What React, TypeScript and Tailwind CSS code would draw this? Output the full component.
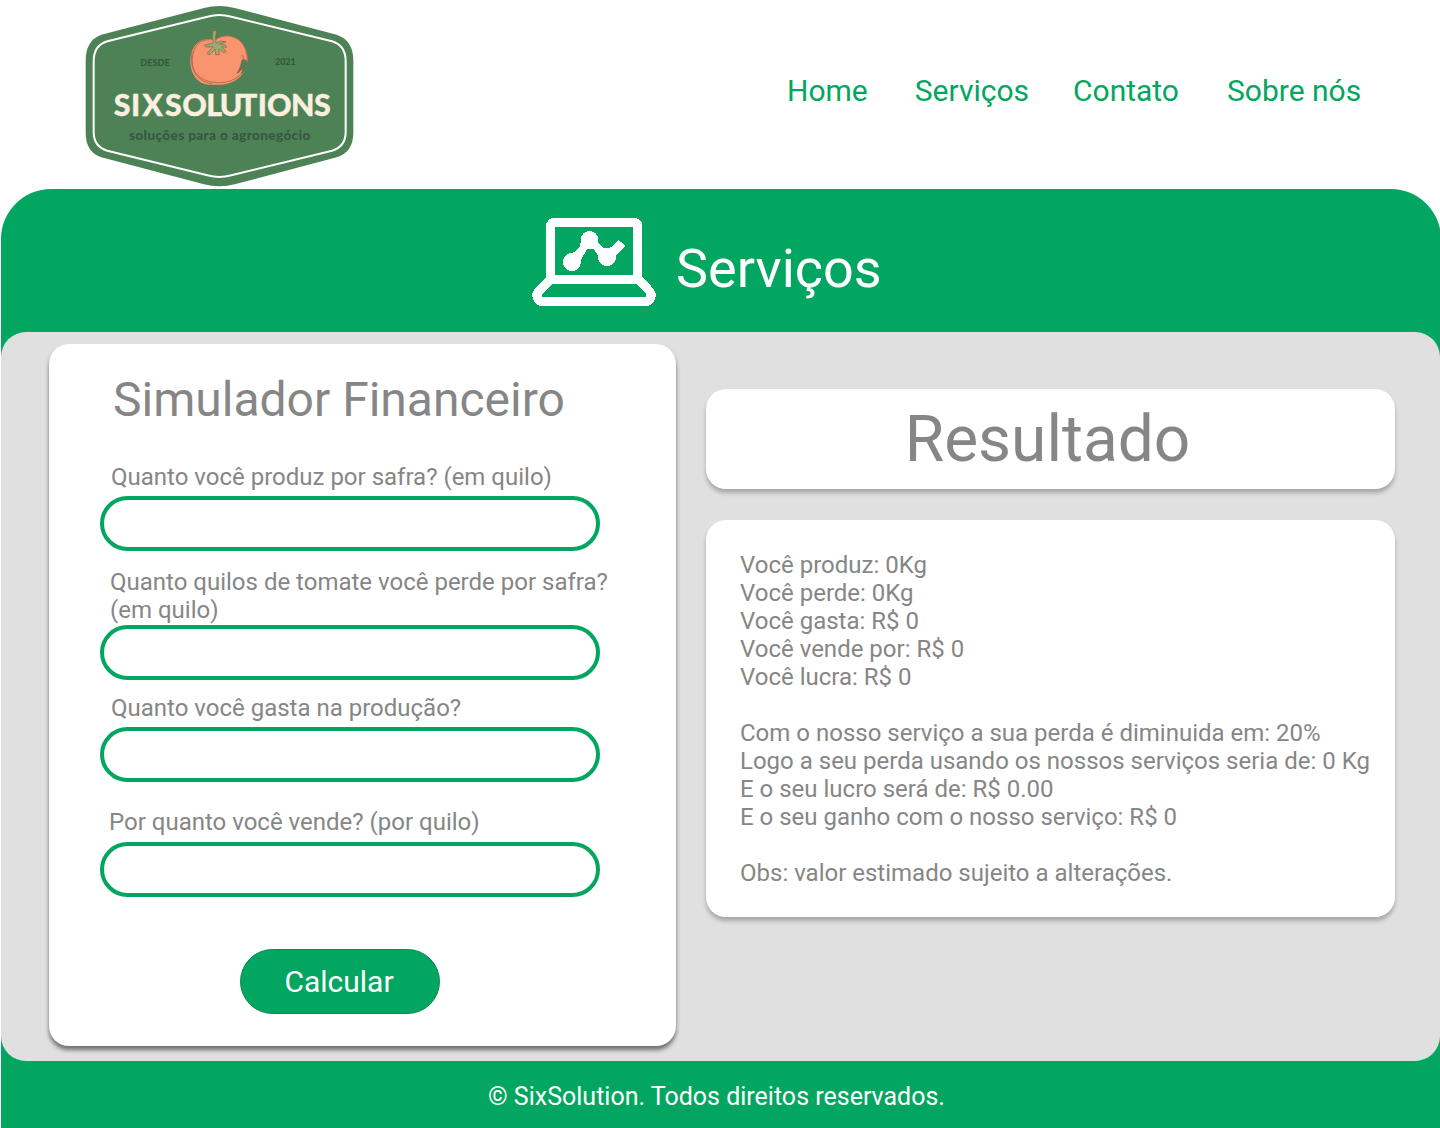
import React from "react";

const navItems = [
  { label: "Home", cls: "ml-[787px]" },
  { label: "Serviços", cls: "ml-[47px]" },
  { label: "Contato", cls: "ml-[44px]" },
  { label: "Sobre nós", cls: "ml-[48px]" },
];

function Logo() {
  return (
    <svg className="absolute left-[80px] top-0 h-[190px] w-[280px]" viewBox="0 0 840 570" role="img" aria-label="SixSolutions">
      <path
        d="M372 24Q418 12 464 24L770 104Q820 121 820 182V398Q820 456 770 472L464 553Q418 565 372 553L64 472Q17 456 17 398V182Q17 121 64 104Z"
        fill="#4d8256"
      />
      <path
        d="M382 50Q418 40 454 50L756 124Q797 136 797 184V396Q797 440 756 452L454 526Q418 536 382 526L82 452Q41 440 41 396V184Q41 136 82 124Z"
        fill="none"
        stroke="#fff"
        strokeWidth="6"
      />
      <path
        d="M390 117C350 116 331 148 331 185C331 224 355 252 385 254H426C469 250 502 220 503 178C502 135 474 106 438 107C422 107 414 114 405 121Z"
        fill="#f8946e"
      />
      <path
        d="M391 119C352 117 335 151 337 188C340 228 374 249 420 248C467 247 498 218 502 181C502 137 476 108 440 108C423 108 414 114 405 121M337 154C326 205 350 245 397 252"
        fill="none"
        stroke="#b45f4b"
        strokeWidth="2.500"
      />
      <path
        d="M399 92Q395 112 400 128L372 136Q376 144 399 140L381 160L388 165L405 147L407 164L418 164L416 147L432 158L439 154L424 140L440 142Q438 131 419 132L438 125Q421 119 408 130Q404 110 410 92Z"
        fill="#9aab74"
        stroke="#8a5f45"
        strokeWidth="2"
      />
      <path d="M486 180L495 180L501 186Q500 208 484 222Q488 210 488 200Q482 216 471 220Q482 205 486 180Z" fill="#4d8256" stroke="#7d5f45" strokeWidth="2" />
      <path d="M484 168Q491 165 491 172Q484 177 493 178L502 184" fill="none" stroke="#98604a" strokeWidth="2" />
      <g fontFamily="Lato, sans-serif" fontWeight="900">
        <text x="181" y="198" fontSize="27" textLength="88" lengthAdjust="spacingAndGlyphs" fill="#35583e">DESDE</text>
        <text x="585" y="195" fontSize="27" textLength="62" lengthAdjust="spacingAndGlyphs" fill="#35583e">2021</text>
        <text
          x="101 153 187 255 307 379 419 477 533 561 633 702"
          y="349"
          fontSize="91"
          fill="#fbf0e0"
          stroke="#fbf0e0"
          strokeWidth="1"
        >SIXSOLUTIONS</text>
        <text x="147" y="420" fontSize="41" textLength="544" fill="#35583e">soluções para o agronegócio</text>
      </g>
    </svg>
  );
}

function LaptopIcon() {
  return (
    <svg className="h-[88px] w-[124px]" viewBox="0 0 124 88" shapeRendering="crispEdges" fill="#fff" aria-hidden="true">
      <path
        fillRule="evenodd"
        d="M20 0H104Q110 2 110 7V59L119 68Q124 74 124 78Q122 86 116 88H8Q2 86 0 78Q0 73 5 68L14 59V7Q15 2 20 0ZM23 9V57H101V9ZM20 66L10 76V79H114V76L104 66Z"
      />
      <circle cx="40" cy="44" r="9" />
      <circle cx="57.500" cy="22" r="9" />
      <circle cx="75" cy="39" r="9" />
      <path d="M38 36Q43 35 48 28L49 22H66V24L70 29L74 31Q78 31 81 27L86 22L89 24L93 28L84 37L83.500 42H66V38L62 31H55L49 42V46H40Z" />
    </svg>
  );
}

function Field({ label, labelClass }: { label: string; labelClass: string }) {
  return (
    <label className="block">
      <span className={`block whitespace-pre-line text-[24px] leading-[28px] text-[#868686] ${labelClass}`}>{label}</span>
      <input className="block h-[55px] w-[500px] rounded-full border-4 border-[#03a660] bg-white px-6 text-[24px] outline-none" />
    </label>
  );
}

const results = `Você produz: 0Kg
Você perde: 0Kg
Você gasta: R$ 0
Você vende por: R$ 0
Você lucra: R$ 0

Com o nosso serviço a sua perda é diminuida em: 20%
Logo a seu perda usando os nossos serviços seria de: 0 Kg
E o seu lucro será de: R$ 0.00
E o seu ganho com o nosso serviço: R$ 0

Obs: valor estimado sujeito a alterações.`;

export default function App() {
  return (
    <div className="h-[1128px] w-[1440px] overflow-hidden bg-white font-['Roboto',sans-serif]">
      <header className="relative h-[189px]">
        <Logo />
        <nav className="flex pt-[73px] text-[30px] leading-[35px] text-[#03a660]">
          {navItems.map((n) => (
            <a key={n.label} href="#" className={`whitespace-nowrap ${n.cls}`}>{n.label}</a>
          ))}
        </nav>
      </header>

      <main className="ml-px h-[939px] w-[1440px] rounded-t-[50px] bg-[#03a660]">
        <div className="flex h-[143px] pl-[531px] pt-[29px]">
          <LaptopIcon />
          <h1 className="ml-[20px] mt-[19px] text-[54px] leading-[63px] text-white">Serviços</h1>
        </div>

        <div className="flex h-[729px] w-[1439px] items-start gap-[30px] rounded-[25px] bg-[#e0e0e0] pl-12 pt-3">
          <form className="h-[702px] w-[627px] rounded-[20px] bg-white pl-[51px] pt-[28px] shadow-[0_4px_4px_rgba(0,0,0,0.5)]" onSubmit={(e) => e.preventDefault()}>
            <h2 className="mb-[35px] ml-[13px] text-[48px] leading-[56px] text-[#868686]">Simulador Financeiro</h2>
            <Field label="Quanto você produz por safra? (em quilo)" labelClass="ml-[11px] mb-[5px]" />
            <Field label={"Quanto quilos de tomate você perde por safra?\n(em quilo)"} labelClass="ml-[10px] mt-[17px] mb-px" />
            <Field label="Quanto você gasta na produção?" labelClass="ml-[11px] mt-[14px] mb-[5px]" />
            <Field label="Por quanto você vende? (por quilo)" labelClass="ml-[9px] mt-[26px] mb-[6px]" />
            <button className="ml-[140px] mt-[52px] h-[65px] w-[200px] rounded-full border border-[#078a50] bg-[#03a660] pr-[2px] text-[30px] leading-[35px] text-white">Calcular</button>
          </form>

          <section className="w-[689px] pt-[45px]">
            <div className="h-[100px] rounded-[20px] bg-white pt-[13px] shadow-[0_4px_4px_rgba(0,0,0,0.25)]">
              <h2 className="pr-[6px] text-center text-[64px] leading-[75px] text-[#868686]">Resultado</h2>
            </div>
            <div className="mt-[31px] h-[397px] rounded-[20px] bg-white pl-[34px] pt-[31px] shadow-[0_4px_4px_rgba(0,0,0,0.25)]">
              <p className="whitespace-pre text-[24px] leading-[28px] text-[#868686]">{results}</p>
            </div>
          </section>
        </div>

        <footer className="pl-[487px] pt-[21px] text-[25px] leading-[29px] text-white">© SixSolution. Todos direitos reservados.</footer>
      </main>
    </div>
  );
}
